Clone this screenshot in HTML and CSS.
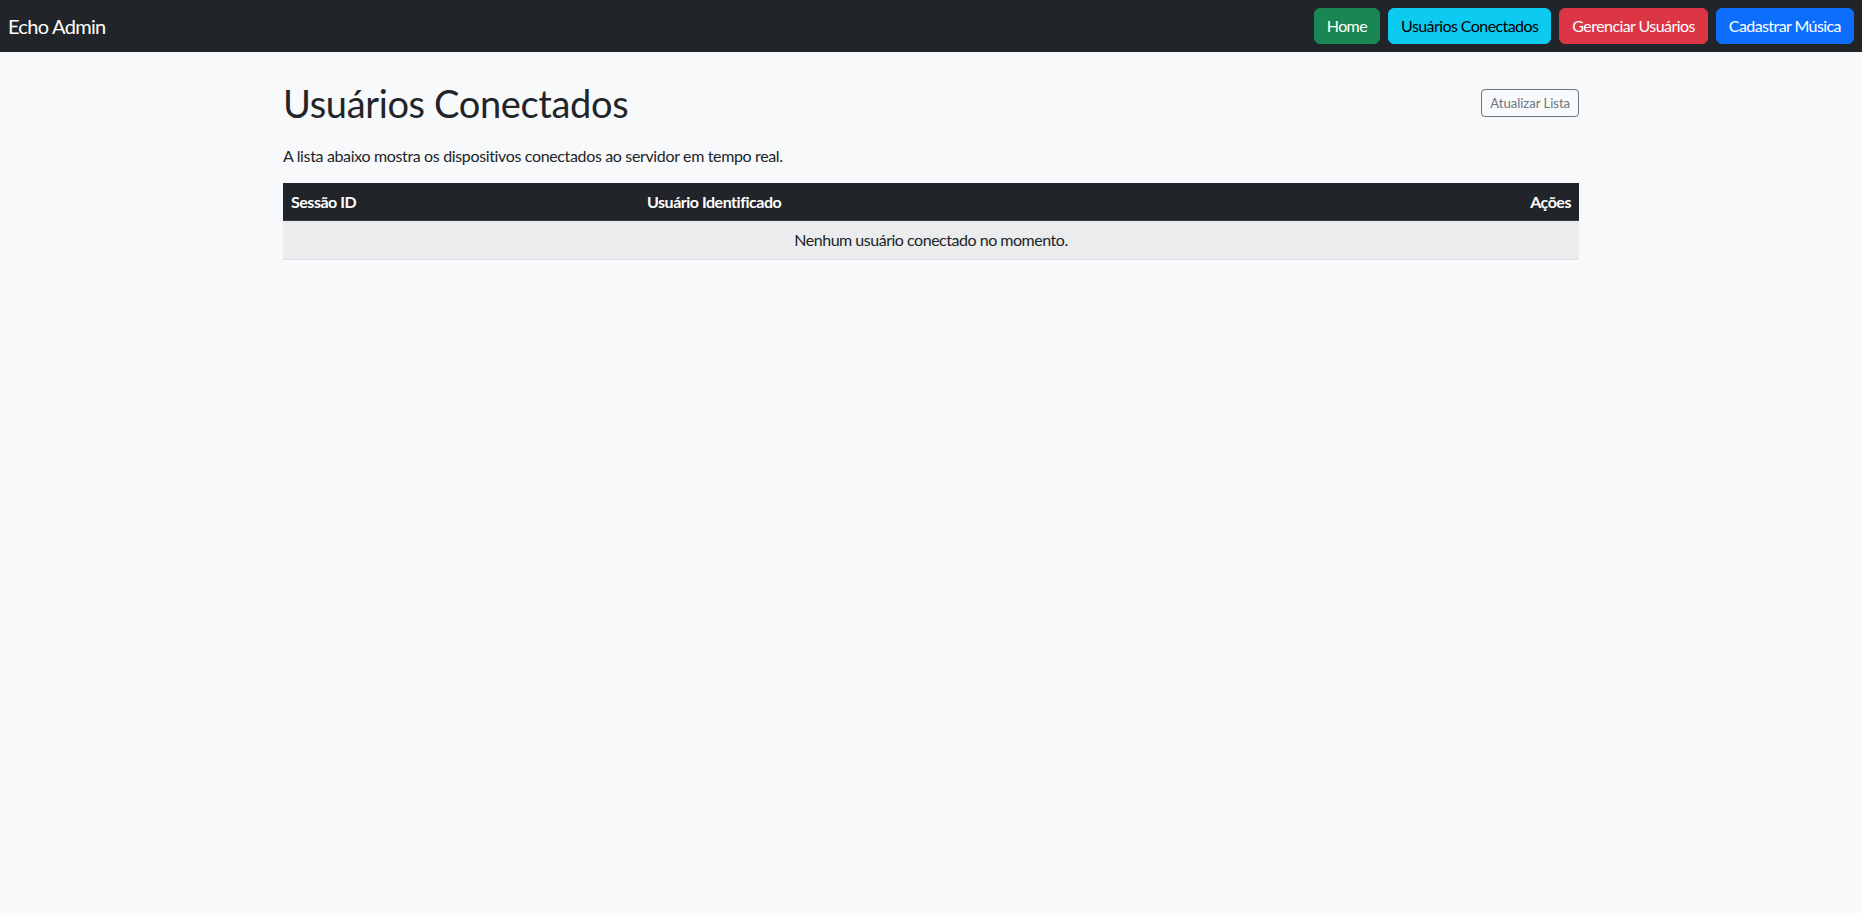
FILE: index.html
```html
<!DOCTYPE html>
<html lang="pt-BR">
<head>
<meta charset="utf-8">
<title>Echo Admin</title>
<link rel="stylesheet" href="styles.css">
</head>
<body>
<nav class="navbar">
  <a class="brand" href="#">Echo Admin</a>
  <div class="nav-actions">
    <a class="btn btn-success" href="#">Home</a>
    <a class="btn btn-info" href="#">Usuários Conectados</a>
    <a class="btn btn-danger" href="#">Gerenciar Usuários</a>
    <a class="btn btn-primary" href="#">Cadastrar Música</a>
  </div>
</nav>
<main class="container">
  <div class="page-head">
    <h1 class="title">Usuários Conectados</h1>
    <button class="btn-sm-outline">Atualizar Lista</button>
  </div>
  <p class="lead-text">A lista abaixo mostra os dispositivos conectados ao servidor em tempo real.</p>
  <table class="table">
    <colgroup>
      <col class="col-session">
      <col class="col-user">
      <col class="col-actions">
    </colgroup>
    <thead>
      <tr>
        <th>Sessão ID</th>
        <th>Usuário Identificado</th>
        <th class="right">Ações</th>
      </tr>
    </thead>
    <tbody>
      <tr class="empty-row">
        <td colspan="3">Nenhum usuário conectado no momento.</td>
      </tr>
    </tbody>
  </table>
</main>
</body>
</html>
```
FILE: styles.css
```css
* { box-sizing: border-box; }
html, body { margin: 0; padding: 0; }
body {
  font-family: "Lato", "Liberation Sans", sans-serif;
  font-size: 16px;
  line-height: 1.5;
  letter-spacing: -0.03em;
  color: #212529;
  background: #f8f9fa;
  min-height: 100vh;
}
.navbar {
  background: #212529;
  height: 52px;
  display: flex;
  align-items: center;
  justify-content: space-between;
  padding: 0 8px;
}
.brand {
  color: #fff;
  font-size: 20px;
  letter-spacing: -0.035em;
  text-decoration: none;
  line-height: 30px;
}
.nav-actions {
  display: flex;
  gap: 8px;
}
.btn {
  display: inline-block;
  height: 36px;
  padding: 5px 12px;
  border: 1px solid transparent;
  border-radius: 6px;
  font-size: 16px;
  line-height: 24px;
  letter-spacing: -0.036em;
  text-decoration: none;
  color: #fff;
}
.btn-success { background: #198754; border-color: #198754; }
.btn-info { background: #0dcaf0; border-color: #0dcaf0; color: #000; }
.btn-danger { background: #dc3545; border-color: #dc3545; }
.btn-primary { background: #0d6efd; border-color: #0d6efd; }
.container {
  max-width: 1320px;
  margin: 0 auto;
  padding: 0 12px;
}
.page-head {
  display: flex;
  justify-content: space-between;
  align-items: center;
  margin-top: 27px;
}
.title {
  margin: 0;
  font-size: 38px;
  font-weight: 400;
  line-height: 48px;
  letter-spacing: -0.35px;
}
.btn-sm-outline {
  font-family: inherit;
  font-size: 13px;
  letter-spacing: 0;
  line-height: 18px;
  padding: 4px 8px;
  color: #6c757d;
  background: transparent;
  border: 1px solid #6c757d;
  border-radius: 4px;
}
.lead-text {
  margin: 17px 0 15px;
  letter-spacing: -0.022em;
}
.table {
  width: 100%;
  border-collapse: collapse;
  table-layout: fixed;
}
.col-session { width: 356px; }
.col-user { width: 680px; }
.table th {
  background: #212529;
  color: #fff;
  font-weight: 700;
  text-align: left;
  padding: 7px 8px;
  line-height: 23px;
  border-bottom: 1px solid #373b3e;
}
.table th.right { text-align: right; }
.empty-row td {
  background: #ebeced;
  text-align: center;
  padding: 7px 8px;
  line-height: 24px;
  border-bottom: 1px solid #dee2e6;
}
```
